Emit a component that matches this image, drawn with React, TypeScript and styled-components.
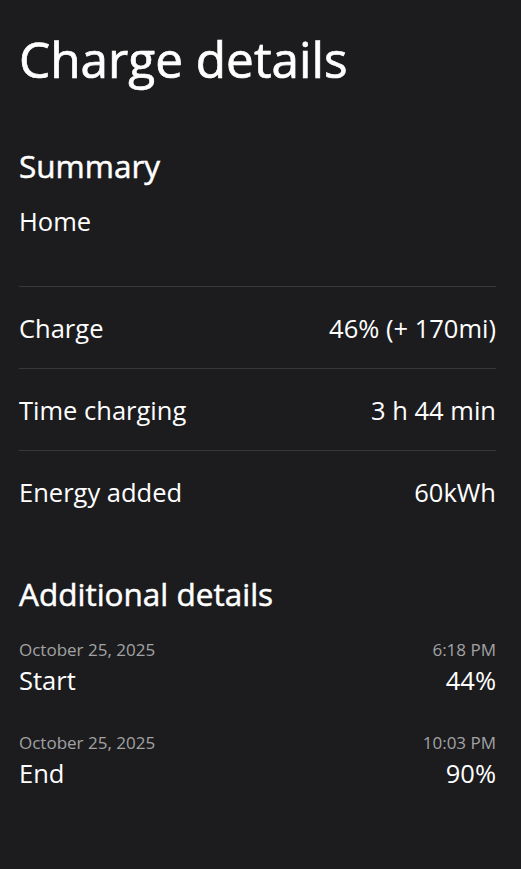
import React from "react";
import styled, { createGlobalStyle } from "styled-components";

const GlobalStyle = createGlobalStyle`
  html, body {
    margin: 0;
    padding: 0;
    background-color: #1c1c1e;
  }
  body {
    font-family: "Open Sans", "Noto Sans", sans-serif;
    color: #ffffff;
    -webkit-font-smoothing: antialiased;
  }
`;

const Page = styled.div`
  min-height: 869px;
  box-sizing: border-box;
  padding: 31px 25px 40px 19px;
  background-color: #1c1c1e;
`;

const PageTitle = styled.h1`
  margin: 0;
  font-size: 49.5px;
  line-height: 56px;
  font-weight: 400;
  -webkit-text-stroke: 0.7px currentColor;
`;

const SectionTitle = styled.h2<{ $gap: number }>`
  margin: ${({ $gap }) => $gap}px 0 0;
  font-size: 31.5px;
  line-height: 40px;
  font-weight: 400;
  -webkit-text-stroke: 0.5px currentColor;
`;

const Location = styled.div`
  margin-top: 20px;
  font-size: 25.5px;
  line-height: 30px;
`;

const Rows = styled.div`
  margin-top: 50px;
  display: flex;
  flex-direction: column;
`;

const Row = styled.div`
  height: 82px;
  box-sizing: border-box;
  border-top: 1px solid #38383a;
  display: flex;
  align-items: center;
  justify-content: space-between;
  font-size: 25.5px;
  line-height: 30px;
`;

const Details = styled.div`
  margin-top: 25px;
  display: flex;
  flex-direction: column;
  gap: 37px;
`;

const Event = styled.div`
  display: flex;
  flex-direction: column;
  gap: 4px;
`;

const EventLine = styled.div<{ $muted?: boolean }>`
  display: flex;
  justify-content: space-between;
  font-size: ${({ $muted }) => ($muted ? 17 : 25.5)}px;
  line-height: ${({ $muted }) => ($muted ? 22 : 30)}px;
  color: ${({ $muted }) => ($muted ? "#a2a2a4" : "#ffffff")};
`;

const summary = [
  { label: "Charge", value: "46% (+ 170mi)" },
  { label: "Time charging", value: "3 h 44 min" },
  { label: "Energy added", value: "60kWh" },
];

const events = [
  { date: "October 25, 2025", time: "6:18 PM", label: "Start", value: "44%" },
  { date: "October 25, 2025", time: "10:03 PM", label: "End", value: "90%" },
];

export default function App() {
  return (
    <>
      <GlobalStyle />
      <Page>
        <PageTitle>Charge details</PageTitle>
        <SectionTitle $gap={59}>Summary</SectionTitle>
        <Location>Home</Location>
        <Rows>
          {summary.map((item) => (
            <Row key={item.label}>
              <span>{item.label}</span>
              <span>{item.value}</span>
            </Row>
          ))}
        </Rows>
        <SectionTitle $gap={42}>Additional details</SectionTitle>
        <Details>
          {events.map((ev) => (
            <Event key={ev.label}>
              <EventLine $muted>
                <span>{ev.date}</span>
                <span>{ev.time}</span>
              </EventLine>
              <EventLine>
                <span>{ev.label}</span>
                <span>{ev.value}</span>
              </EventLine>
            </Event>
          ))}
        </Details>
      </Page>
    </>
  );
}
